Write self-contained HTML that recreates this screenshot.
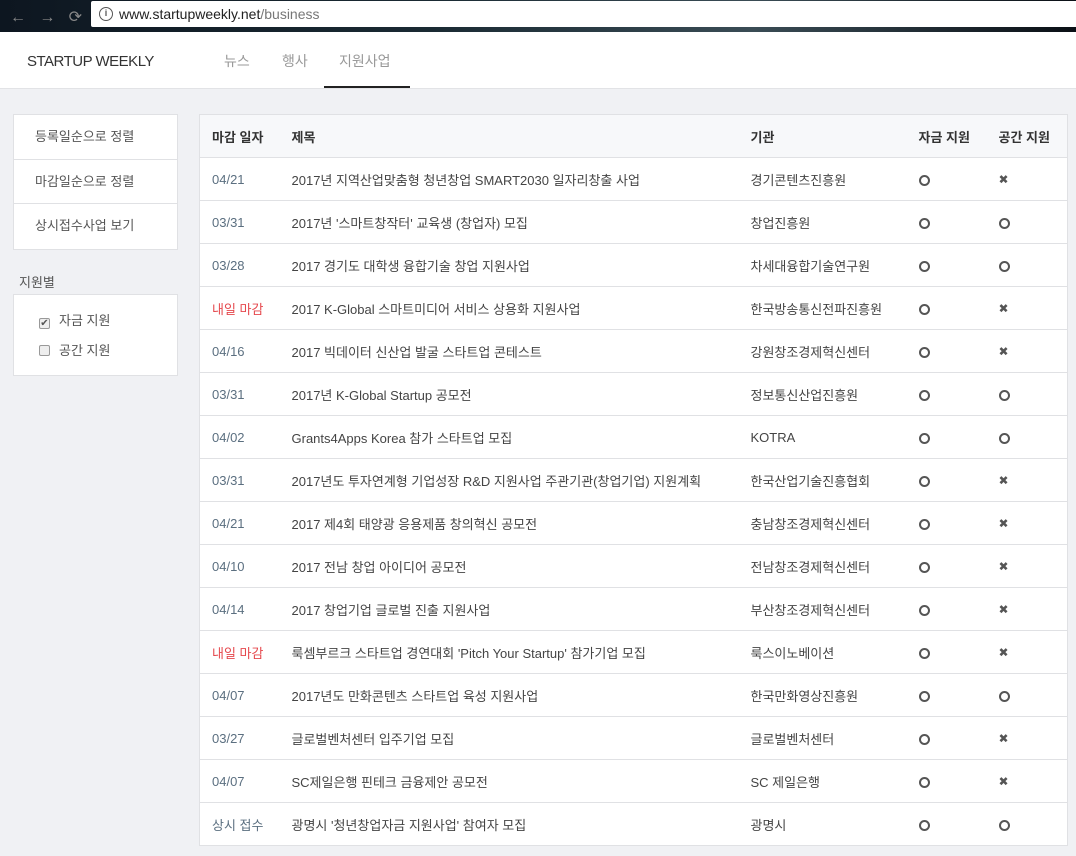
<!DOCTYPE html>
<html><head><meta charset="utf-8"><style>
*{margin:0;padding:0;box-sizing:border-box}
body{width:1076px;height:856px;overflow:hidden;background:#f0f1f4;font-family:"Liberation Sans","Noto Sans CJK KR",sans-serif;font-size:13px;color:#444;position:relative}
.chrome{position:absolute;left:0;top:0;width:1076px;height:32px;background:linear-gradient(90deg,#0d1620,#1a2a33 40%,#3a4c55 70%,#0a0f15);}
.url{position:absolute;left:91px;top:1px;right:0;height:26px;background:#fff;border-radius:2px 0 0 2px;}
.url span{position:absolute;left:28px;top:5px;font-size:14px;color:#222}
.url span i{font-style:normal;color:#777}
.url b{position:absolute;left:8px;top:6px;width:14px;height:14px;border:1.5px solid #555;border-radius:50%;font-size:9px;text-align:center;line-height:11px;color:#555}
.nav{position:absolute;left:10px;top:7px;color:#888;font-size:16px}
.hdr{position:absolute;left:0;top:32px;width:1076px;height:57px;background:#fff;border-bottom:1px solid #e2e3e6}
.logo{position:absolute;left:27px;top:21px;font-size:15px;color:#333;letter-spacing:-0.5px}
.tab{position:absolute;top:19px;font-size:14px;color:#999}
.ul{position:absolute;left:324px;top:54px;width:86px;height:2px;background:#222}
.side{position:absolute;left:13px;top:114px;width:165px;background:#fff;border:1px solid #e0e1e4}
.side div{height:44.5px;line-height:44px;padding-left:21px;border-bottom:1px solid #e0e1e4;color:#555;font-size:13px}
.side div:last-child{border-bottom:0}
.lbl{position:absolute;left:19px;top:272px;color:#555}
.chk{position:absolute;left:13px;top:294px;width:165px;height:82px;background:#fff;border:1px solid #e0e1e4}
.chk p{position:absolute;left:25px;color:#555}
.chk p i{display:inline-block;width:11px;height:11px;border:1px solid #999;border-radius:2px;background:#eee;vertical-align:-1px;margin-right:9px;font-style:normal;font-size:10px;line-height:9px;text-align:center}
table{position:absolute;left:199px;top:114px;width:869px;border-collapse:collapse;background:#fff;border:1px solid #e0e1e4;table-layout:fixed}
td,th{height:43px;border-bottom:1px solid #e0e1e4;text-align:left;font-weight:normal;white-space:nowrap;vertical-align:middle;overflow:visible}
th{background:#f7f8fa;color:#333;font-weight:bold;font-size:13px}
td.d,th.d{padding-left:12px;}
td.d{color:#5b6f80}
td.r{color:#e5484d}
.o{display:inline-block;width:11px;height:11px;border:2px solid #555;border-radius:50%;vertical-align:middle}
.x{color:#555;font-size:12px;margin-left:0px;vertical-align:middle}
</style></head><body>
<div class="chrome"><div class="nav">←&nbsp;&nbsp;&nbsp;→&nbsp;&nbsp;&nbsp;⟳</div><div class="url"><b>i</b><span>www.startupweekly.net<i>/business</i></span></div></div>
<div class="hdr"><div class="logo">STARTUP WEEKLY</div>
<div class="tab" style="left:224px">뉴스</div><div class="tab" style="left:282px">행사</div><div class="tab" style="left:339px">지원사업</div><div class="ul"></div></div>
<div class="side"><div>등록일순으로 정렬</div><div>마감일순으로 정렬</div><div>상시접수사업 보기</div></div>
<div class="lbl">지원별</div>
<div class="chk"><p style="top:15px"><i>✔</i>자금 지원</p><p style="top:45px"><i></i>공간 지원</p></div>
<table>
<colgroup><col style="width:92px"><col style="width:459px"><col style="width:168px"><col style="width:80px"><col></colgroup>
<tr><th class="d">마감 일자</th><th>제목</th><th>기관</th><th>자금 지원</th><th>공간 지원</th></tr>
<tr><td class="d">04/21</td><td>2017년 지역산업맞춤형 청년창업 SMART2030 일자리창출 사업</td><td>경기콘텐츠진흥원</td><td><span class="o"></span></td><td><span class="x">✖</span></td></tr>
<tr><td class="d">03/31</td><td>2017년 '스마트창작터' 교육생 (창업자) 모집</td><td>창업진흥원</td><td><span class="o"></span></td><td><span class="o"></span></td></tr>
<tr><td class="d">03/28</td><td>2017 경기도 대학생 융합기술 창업 지원사업</td><td>차세대융합기술연구원</td><td><span class="o"></span></td><td><span class="o"></span></td></tr>
<tr><td class="d r">내일 마감</td><td>2017 K-Global 스마트미디어 서비스 상용화 지원사업</td><td>한국방송통신전파진흥원</td><td><span class="o"></span></td><td><span class="x">✖</span></td></tr>
<tr><td class="d">04/16</td><td>2017 빅데이터 신산업 발굴 스타트업 콘테스트</td><td>강원창조경제혁신센터</td><td><span class="o"></span></td><td><span class="x">✖</span></td></tr>
<tr><td class="d">03/31</td><td>2017년 K-Global Startup 공모전</td><td>정보통신산업진흥원</td><td><span class="o"></span></td><td><span class="o"></span></td></tr>
<tr><td class="d">04/02</td><td>Grants4Apps Korea 참가 스타트업 모집</td><td>KOTRA</td><td><span class="o"></span></td><td><span class="o"></span></td></tr>
<tr><td class="d">03/31</td><td>2017년도 투자연계형 기업성장 R&amp;D 지원사업 주관기관(창업기업) 지원계획</td><td>한국산업기술진흥협회</td><td><span class="o"></span></td><td><span class="x">✖</span></td></tr>
<tr><td class="d">04/21</td><td>2017 제4회 태양광 응용제품 창의혁신 공모전</td><td>충남창조경제혁신센터</td><td><span class="o"></span></td><td><span class="x">✖</span></td></tr>
<tr><td class="d">04/10</td><td>2017 전남 창업 아이디어 공모전</td><td>전남창조경제혁신센터</td><td><span class="o"></span></td><td><span class="x">✖</span></td></tr>
<tr><td class="d">04/14</td><td>2017 창업기업 글로벌 진출 지원사업</td><td>부산창조경제혁신센터</td><td><span class="o"></span></td><td><span class="x">✖</span></td></tr>
<tr><td class="d r">내일 마감</td><td>룩셈부르크 스타트업 경연대회 'Pitch Your Startup' 참가기업 모집</td><td>룩스이노베이션</td><td><span class="o"></span></td><td><span class="x">✖</span></td></tr>
<tr><td class="d">04/07</td><td>2017년도 만화콘텐츠 스타트업 육성 지원사업</td><td>한국만화영상진흥원</td><td><span class="o"></span></td><td><span class="o"></span></td></tr>
<tr><td class="d">03/27</td><td>글로벌벤처센터 입주기업 모집</td><td>글로벌벤처센터</td><td><span class="o"></span></td><td><span class="x">✖</span></td></tr>
<tr><td class="d">04/07</td><td>SC제일은행 핀테크 금융제안 공모전</td><td>SC 제일은행</td><td><span class="o"></span></td><td><span class="x">✖</span></td></tr>
<tr><td class="d">상시 접수</td><td>광명시 '청년창업자금 지원사업' 참여자 모집</td><td>광명시</td><td><span class="o"></span></td><td><span class="o"></span></td></tr>
</table>
</body></html>
